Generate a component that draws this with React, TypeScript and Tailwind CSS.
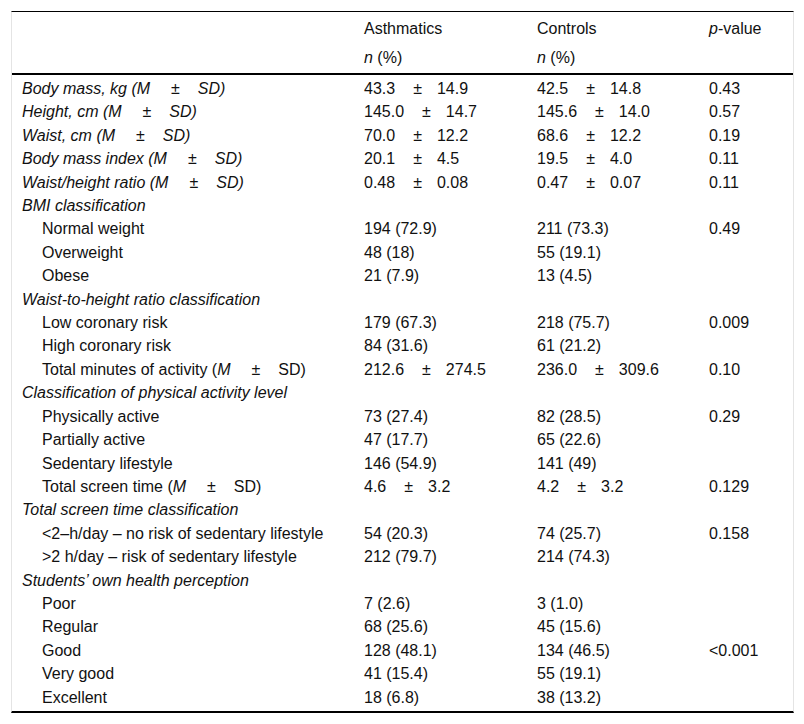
import React from "react";

const PM = ({ a, b }: { a: string; b: string }) => (
  <>
    {a}
    <span className="pl-[18px] pr-[15px]">±</span>
    {b}
  </>
);

type Row = {
  label: React.ReactNode;
  kind: "main" | "group" | "sub";
  a?: React.ReactNode;
  c?: React.ReactNode;
  p?: string;
};

const MSD = (
  <>
    (<i>M</i>
    <span className="pl-[21px] pr-[18px]">±</span>SD)
  </>
);
const MSDi = (
  <>
    (M<span className="pl-[21px] pr-[18px]">±</span>SD)
  </>
);

const rows: Row[] = [
  { label: <>Body mass, kg {MSDi}</>, kind: "main", a: <PM a="43.3" b="14.9" />, c: <PM a="42.5" b="14.8" />, p: "0.43" },
  { label: <>Height, cm {MSDi}</>, kind: "main", a: <PM a="145.0" b="14.7" />, c: <PM a="145.6" b="14.0" />, p: "0.57" },
  { label: <>Waist, cm {MSDi}</>, kind: "main", a: <PM a="70.0" b="12.2" />, c: <PM a="68.6" b="12.2" />, p: "0.19" },
  { label: <>Body mass index {MSDi}</>, kind: "main", a: <PM a="20.1" b="4.5" />, c: <PM a="19.5" b="4.0" />, p: "0.11" },
  { label: <>Waist/height ratio {MSDi}</>, kind: "main", a: <PM a="0.48" b="0.08" />, c: <PM a="0.47" b="0.07" />, p: "0.11" },
  { label: "BMI classification", kind: "group" },
  { label: "Normal weight", kind: "sub", a: "194 (72.9)", c: "211 (73.3)", p: "0.49" },
  { label: "Overweight", kind: "sub", a: "48 (18)", c: "55 (19.1)" },
  { label: "Obese", kind: "sub", a: "21 (7.9)", c: "13 (4.5)" },
  { label: "Waist-to-height ratio classification", kind: "group" },
  { label: "Low coronary risk", kind: "sub", a: "179 (67.3)", c: "218 (75.7)", p: "0.009" },
  { label: "High coronary risk", kind: "sub", a: "84 (31.6)", c: "61 (21.2)" },
  { label: <>Total minutes of activity {MSD}</>, kind: "sub", a: <PM a="212.6" b="274.5" />, c: <PM a="236.0" b="309.6" />, p: "0.10" },
  { label: "Classification of physical activity level", kind: "group" },
  { label: "Physically active", kind: "sub", a: "73 (27.4)", c: "82 (28.5)", p: "0.29" },
  { label: "Partially active", kind: "sub", a: "47 (17.7)", c: "65 (22.6)" },
  { label: "Sedentary lifestyle", kind: "sub", a: "146 (54.9)", c: "141 (49)" },
  { label: <>Total screen time {MSD}</>, kind: "sub", a: <PM a="4.6" b="3.2" />, c: <PM a="4.2" b="3.2" />, p: "0.129" },
  { label: "Total screen time classification", kind: "group" },
  { label: "<2–h/day – no risk of sedentary lifestyle", kind: "sub", a: "54 (20.3)", c: "74 (25.7)", p: "0.158" },
  { label: ">2 h/day – risk of sedentary lifestyle", kind: "sub", a: "212 (79.7)", c: "214 (74.3)" },
  { label: "Students’ own health perception", kind: "group" },
  { label: "Poor", kind: "sub", a: "7 (2.6)", c: "3 (1.0)" },
  { label: "Regular", kind: "sub", a: "68 (25.6)", c: "45 (15.6)" },
  { label: "Good", kind: "sub", a: "128 (48.1)", c: "134 (46.5)", p: "<0.001" },
  { label: "Very good", kind: "sub", a: "41 (15.4)", c: "55 (19.1)" },
  { label: "Excellent", kind: "sub", a: "18 (6.8)", c: "38 (13.2)" },
];

const cell = "p-0 pt-[4px] pl-[10px] leading-[19.4px] whitespace-nowrap";

export default function App() {
  return (
    <div className="w-[804px] h-[724px] bg-white pt-[11px] pl-[11px]" style={{ fontFamily: '"Liberation Sans", Arial, sans-serif' }}>
      <div className="w-[783px] border-t border-black border-x border-x-[#e4e4e4] border-b-2 border-b-black pb-[4px] text-[16px] text-[#111]">
        <table className="w-full table-fixed border-collapse">
          <colgroup>
            <col className="w-[342px]" />
            <col className="w-[173px]" />
            <col className="w-[172px]" />
            <col />
          </colgroup>
          <thead>
            <tr className="h-[31px]">
              <th className="p-0 pl-[10px] pt-[2px]"></th>
              <th className="p-0 pl-[10px] pt-[2px] text-left font-normal">Asthmatics</th>
              <th className="p-0 pl-[10px] pt-[2px] text-left font-normal">Controls</th>
              <th className="p-0 pl-[10px] pt-[2px] text-left font-normal">
                <i>p</i>-value
              </th>
            </tr>
            <tr className="h-[31px] border-b-2 border-black">
              <th className="p-0 pl-[10px]"></th>
              <th className="p-0 pl-[10px] text-left font-normal">
                <i>n</i> (%)
              </th>
              <th className="p-0 pl-[10px] text-left font-normal">
                <i>n</i> (%)
              </th>
              <th className="p-0 pl-[10px]"></th>
            </tr>
          </thead>
          <tbody>
            {rows.map((r, i) => (
              <tr key={i}>
                <td className={r.kind === "sub" ? `${cell} pl-[30px]` : `${cell} italic`}>{r.label}</td>
                <td className={cell}>{r.a}</td>
                <td className={cell}>{r.c}</td>
                <td className={cell}>{r.p}</td>
              </tr>
            ))}
          </tbody>
        </table>
      </div>
    </div>
  );
}
